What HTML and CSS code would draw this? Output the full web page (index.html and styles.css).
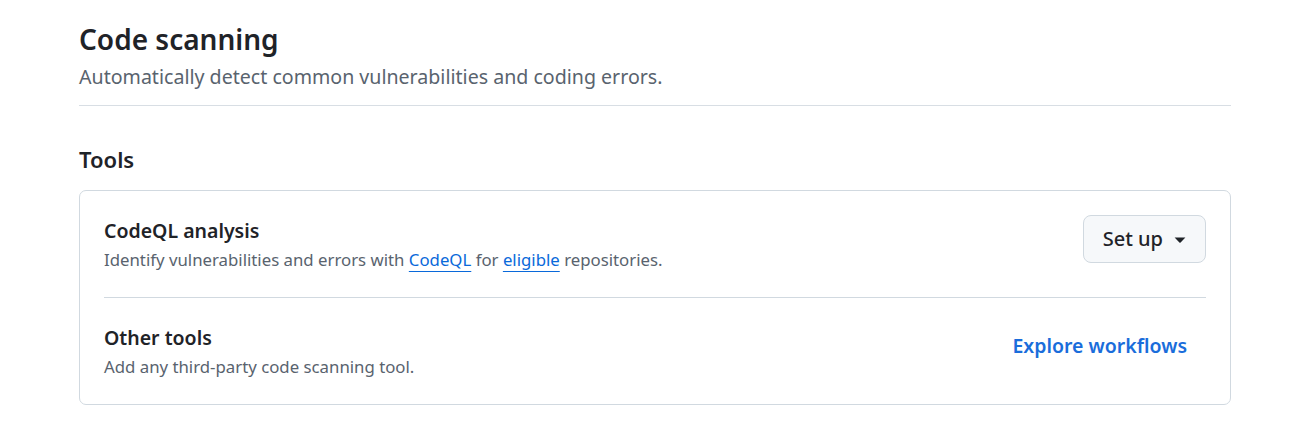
FILE: index.html
```html
<!DOCTYPE html>
<html>
<head>
<meta charset="utf-8">
<link rel="stylesheet" href="styles.css">
</head>
<body>
<main class="page">
  <header class="subhead">
    <h2 class="subhead-title">Code scanning</h2>
    <p class="subhead-desc">Automatically detect common vulnerabilities and coding errors.</p>
  </header>
  <h3 class="section-title">Tools</h3>
  <div class="box">
    <div class="row">
      <div class="row-text">
        <div class="row-title">CodeQL analysis</div>
        <div class="row-desc">Identify vulnerabilities and errors with <a class="link" href="#">CodeQL</a> for <a class="link" href="#">eligible</a> repositories.</div>
      </div>
      <button class="btn">Set up <svg class="caret" width="12" height="6" viewBox="0 0 12 6"><path d="M0.6 0.4 H11.4 L6.6 5.4 a0.8 0.8 0 0 1 -1.2 0 Z" fill="#1f2328"/></svg></button>
    </div>
    <div class="row row-last">
      <div class="row-text">
        <div class="row-title">Other tools</div>
        <div class="row-desc">Add any third-party code scanning tool.</div>
      </div>
      <a class="btn-link" href="#">Explore workflows</a>
    </div>
  </div>
</main>
</body>
</html>
```
FILE: styles.css
```css
* { box-sizing: border-box; }
body {
  margin: 0;
  background: #ffffff;
  font-family: "Noto Sans", "Open Sans", sans-serif;
  color: #1f2328;
}
.page {
  width: 1152px;
  margin-left: 79px;
  padding-top: 21px;
}
.subhead {
  border-bottom: 1px solid #d8dee4;
  padding-bottom: 14px;
}
.subhead-title {
  margin: 0;
  font-size: 28px;
  font-weight: 600;
  line-height: 36px;
}
.subhead-desc {
  margin: 6px 0 0;
  font-size: 19.6px;
  line-height: 28px;
  color: #59636e;
}
.section-title {
  margin: 38px 0 16px;
  font-size: 22px;
  font-weight: 600;
  line-height: 30px;
}
.box {
  border: 1px solid #d1d9e0;
  border-radius: 7px;
  padding: 0 24px;
}
.row {
  display: flex;
  align-items: flex-start;
  justify-content: space-between;
  padding: 24px 0;
  border-bottom: 1px solid #d1d9e0;
}
.row-last { border-bottom: none; }
.row-title {
  font-size: 19.5px;
  font-weight: 600;
  line-height: 32px;
}
.row-desc {
  font-size: 16.8px;
  line-height: 26px;
  color: #59636e;
}
.link {
  color: #0969da;
  text-decoration: underline;
  text-decoration-thickness: 1px;
  text-underline-offset: 5px;
}
.btn {
  display: flex;
  align-items: center;
  gap: 11px;
  height: 48px;
  padding: 0 19px;
  background: #f6f8fa;
  border: 1px solid #d1d9e0;
  border-radius: 8px;
  font-family: inherit;
  font-size: 20px;
  font-weight: 500;
  line-height: 30px;
  color: #1f2328;
}
.caret { display: block; margin-top: 1px; }
.btn-link {
  display: flex;
  align-items: center;
  height: 48px;
  padding: 0 19px;
  font-size: 19.5px;
  font-weight: 600;
  line-height: 30px;
  color: #1a6ddb;
  text-decoration: none;
}
```
